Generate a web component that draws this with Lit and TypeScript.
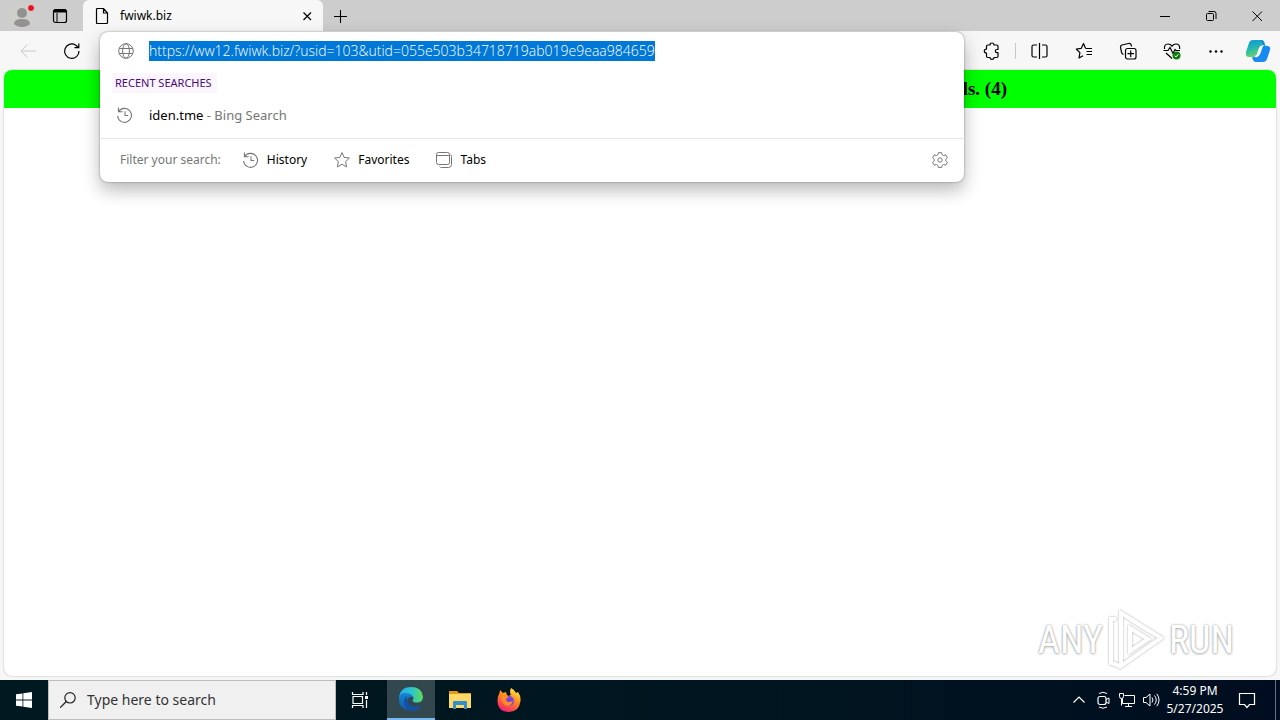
import { LitElement, html, css, svg, type TemplateResult, type SVGTemplateResult } from "lit";
import { customElement } from "lit/decorators.js";

const icon = (size: number, body: SVGTemplateResult, box = "0 0 16 16"): TemplateResult =>
  html`<svg width=${size} height=${size} viewBox=${box} fill="none" stroke="currentColor" aria-hidden="true">${body}</svg>`;

const historyIcon = icon(18, svg`<path d="M2.3 1.5v4h4M2.5 5.3A6.6 6.6 0 1 1 1.5 9.5M8.5 5v4h3" />`, "0 0 17 17");
const globeIcon = icon(18, svg`<circle cx="9" cy="9" r="7.3"/><ellipse cx="9" cy="9" rx="3.4" ry="7.3"/><path d="M2.3 6.5h13.4M2.3 11.5h13.4"/>`, "0 0 18 18");
const starIcon = icon(18, svg`<path stroke-linejoin="round" d="M9 1.6l2.2 4.8 5.2.6-3.8 3.6 1 5.3L9 13.3l-4.6 2.6 1-5.3L1.6 7l5.2-.6z"/>`, "0 0 18 18");
const tabsIcon = icon(18, svg`<rect x="1.5" y="1.5" width="13" height="12" rx="2"/><path d="M1.5 4.5h13M4.5 15.5q.5 1 2 1h7q3 0 3-3v-8q0-1.500-1-2"/>`, "0 0 18 18");
const gearIcon = icon(18, svg`<circle cx="9" cy="9" r="2.200"/><path stroke-linejoin="round" d="M7.300 1.700h3.400l.5 2.100 1.300.8 2.200-.7 1.700 2.900-1.600 1.500v1.500l1.600 1.500-1.700 2.900-2.200-.7-1.300.8-.5 2.100H7.300l-.5-2.100-1.300-.8-2.200.7-1.700-2.900 1.600-1.500V8.300L1.600 6.800l1.700-2.900 2.200.7 1.300-.8z"/>`, "0 0 18 18");

@customElement("app-root")
export class AppRoot extends LitElement {
  static styles = css`
    :host {
      display: flex;
      flex-direction: column;
      min-height: 100vh;
      background: #f7f7f7;
      color: #000;
      font: 13px/20px "Noto Sans", "Open Sans", sans-serif;
    }
    * { box-sizing: border-box; }
    button, input { font: inherit; color: inherit; border: 0; padding: 0; margin: 0; background: none; }
    button { display: flex; align-items: center; justify-content: center; flex: none; }
    svg { display: block; flex: none; }

    .titlebar { display: flex; height: 31px; background: #cdcdcd; flex: none; }
    .profile { width: 44px; }
    .workspaces { width: 32px; margin-right: 7px; }
    .tab {
      display: flex; align-items: center; width: 240px; gap: 10px;
      padding: 0 8px 0 11px; background: #f7f7f7; border-radius: 6px 6px 0 0; font-size: 12px;
    }
    .tab-title { flex: 1; }
    .newtab { width: 34px; }
    .window-controls { display: flex; margin-left: auto; }
    .window-controls button { width: 46px; }

    .toolbar { display: flex; height: 39px; flex: none; padding: 0 2px 0 6px; }
    .tool { width: 44px; }
    .disabled { color: #c8c8c8; }
    .address { flex: 1; position: relative; margin: 0 6px; }
    .divider { width: 1px; height: 16px; align-self: center; margin: 0 2px 0 1px; background: #c8c8c8; }
    .copilot { width: 40px; }

    .suggest {
      position: absolute; z-index: 2; top: 1px; left: 0; right: 0;
      background: #fff; border-radius: 8px; color: #767676;
      box-shadow: 0 0 2px rgba(0, 0, 0, .45), 0 8px 18px rgba(0, 0, 0, .28);
    }
    .url-row, .result { display: flex; align-items: center; gap: 14px; padding: 0 17px; }
    .url-row { height: 38px; }
    .url { height: 20px; field-sizing: content; background: #0078d7; color: #fff; font: 300 14px/20px "Open Sans", "Noto Sans", sans-serif; }
    .group {
      display: table; margin: 3px 0 0 12px; padding: 0 5px 0 3px;
      background: #fbf5fd; color: #4b0a78; font-size: 11px; font-weight: 400;
    }
    .result { height: 45px; padding: 0 16px 2px; gap: 15px; }
    .result a { color: inherit; text-decoration: none; }
    .result b { color: #000; font-weight: 400; }
    .filters { display: flex; align-items: center; height: 44px; border-top: 1px solid #e8e8e8; padding: 0 15px 2px 20px; font-size: 12px; }
    .filters button { gap: 7px; margin-right: 26px; }
    .filters span { color: #000; }
    .filters .caption { color: #767676; margin-right: 21px; }
    .filters .settings { margin: 0 0 0 auto; }

    .page {
      flex: 1; margin: 0 4px 4px; overflow: hidden; background: #fff;
      border-radius: 8px; box-shadow: 0 0 2px rgba(0, 0, 0, .3); position: relative;
    }
    .notice {
      margin: 0; padding: 8px 269px 8px 0; background: #0f0; text-align: right;
      font: bold 19px/22px "Liberation Serif", serif;
    }
    .watermark {
      position: absolute; right: 42px; bottom: 4px; display: flex; align-items: center; gap: 4px;
      color: #fff; font: 38px/64px "Roboto Condensed", "Open Sans Condensed", "Noto Sans Condensed", "Liberation Sans Narrow", sans-serif;
      text-shadow: 0 0 2px #999, 0 1px 3px #bbb;
    }
    .play { filter: drop-shadow(0 0 1px #aaa); }

    .taskbar { display: flex; height: 40px; flex: none; background: linear-gradient(90deg, #001820, #00151f 60%, #000d20); color: #fff; }
    .start { width: 48px; }
    .search {
      display: flex; align-items: center; gap: 11px; width: 288px; padding-left: 11px;
      background: #f0f0f0; border: 1px solid #bdbdbd; color: #222;
    }
    .search input { flex: 1; min-width: 0; font-size: 14px; }
    .search input::placeholder { color: #333; opacity: 1; }
    .app { width: 48px; margin-right: 1px; }
    .taskview { margin-right: 3px; }
    .active { background: #33474e; border-bottom: 2px solid #76b9ed; }
    .tray { display: flex; margin-left: auto; }
    .tray button { width: 24px; }
    .tray .clock { width: 64px; font-size: 12px; line-height: 18px; white-space: nowrap; }
    .tray .notify { width: 40px; }
    .tray .desktop { width: 5px; margin-left: 8px; border-left: 1px solid #687080; }
  `;

  render() {
    return html`
      <header class="titlebar">
        <button class="profile" aria-label="Profile">
          <svg width="28" height="28" viewBox="0 0 28 28"><circle cx="14" cy="14" r="13" fill="#d0cecb"/><circle cx="14" cy="11" r="5" fill="#929292"/><path d="M6 22q0-5 8-5t8 5q-3 3-8 3t-8-3z" fill="#929292"/><circle cx="23" cy="6" r="3.500" fill="#e81123" stroke="#d8d8d8"/></svg>
        </button>
        <button class="workspaces" aria-label="Tab actions">
          ${icon(16, svg`<rect x="1.500" y="1.500" width="13" height="13" rx="2" stroke-width="1.200"/><path d="M1.500 3.500h13M5 5v9" stroke-width="1"/><path d="M2 3h12" stroke-width="3"/>`)}
        </button>
        <div class="tab">
          ${icon(16, svg`<path d="M2.500 1.500q0-1 1-1h6l4 4.500v9.500q0 1-1 1h-9q-1 0-1-1zM9.500.5v4.500h4" stroke-width="1.200"/>`)}
          <span class="tab-title">fwiwk.biz</span>
          <button aria-label="Close tab">${icon(16, svg`<path d="M4.500 4.500l7.500 7.500M12 4.500L4.500 12" stroke-width="1.200"/>`)}</button>
        </div>
        <button class="newtab" aria-label="New tab">${icon(16, svg`<path d="M8.500 2v13M2 8.500h13" stroke-width="1.100"/>`)}</button>
        <div class="window-controls">
          <button aria-label="Minimize">${icon(16, svg`<path d="M3 8.500h10"/>`)}</button>
          <button aria-label="Restore">${icon(16, svg`<rect x="3.500" y="5.500" width="7" height="7" rx="1"/><path d="M5.500 3.500h5.500q2 0 2 2V11"/>`)}</button>
          <button aria-label="Close">${icon(16, svg`<path d="M3.500 3.500l9.500 9.500M13 3.500L3.500 13"/>`)}</button>
        </div>
      </header>

      <nav class="toolbar">
        <button class="tool disabled" aria-label="Back">${icon(18, svg`<path d="M17 9H2M8.500 2.500L2 9l6.500 6.500"/>`, "0 0 18 18")}</button>
        <button class="tool" aria-label="Refresh">${icon(18, svg`<path d="M16 9A7.200 7.200 0 1 1 12.500 3L15.500 5.500M15.800 1.500V5.700h-4.300" stroke-width="1.200"/>`, "0 0 18 18")}</button>
        <div class="address">
          <section class="suggest">
            <div class="url-row">
              ${globeIcon}
              <input class="url" aria-label="Address" value="https://ww12.fwiwk.biz/?usid=103&utid=055e503b34718719ab019e9eaa984659" />
            </div>
            <h2 class="group">RECENT SEARCHES</h2>
            <div class="result">${historyIcon}<a href="#"><b>iden.tme</b> - Bing Search</a></div>
            <div class="filters">
              <span class="caption">Filter your search:</span>
              <button>${historyIcon}<span>History</span></button>
              <button>${starIcon}<span>Favorites</span></button>
              <button>${tabsIcon}<span>Tabs</span></button>
              <button class="settings" aria-label="Settings">${gearIcon}</button>
            </div>
          </section>
        </div>
        <button class="tool" aria-label="Extensions">${icon(18, svg`<path stroke-width="1.200" stroke-linejoin="round" d="M3.500 4.200q0-1.200 1.200-1.200H7q0-2 2-2t2 2h2.800q1.200 0 1.200 1.200v3.300h-1q-1.700 0-1.700 1.600t1.700 1.600h1v3.600q0 1.200-1.200 1.200H11q0 1.800-2 1.800t-2-1.800H4.700q-1.200 0-1.200-1.200v-3.200Q1.300 11.100 1.300 9.100t2.200-2z"/>`, "0 0 18 18")}</button>
        <span class="divider"></span>
        <button class="tool" aria-label="Split screen">${icon(18, svg`<path stroke-width="1.200" d="M8.500 1v16M6 3H2.500Q1 3 1 4.500v9Q1 15 2.500 15H6M11 3h3.500Q16 3 16 4.500v9q0 1.500-1.500 1.500H11"/>`, "0 0 18 18")}</button>
        <button class="tool" aria-label="Favorites">${icon(18, svg`<path stroke-width="1.200" stroke-linejoin="round" d="M10.500 6.300L8.500 1.600 6.300 6.300 1.300 7l3.600 3.600-.9 5.400 4-2.200M10.500 6.500H17M11.500 9.500H17M11.500 12.500H17"/>`, "0 0 18 18")}</button>
        <button class="tool" aria-label="Collections">${icon(18, svg`<rect x="6.500" y="6.500" width="10.500" height="10.500" rx="2" stroke-width="1.200"/><path stroke-width="1.200" d="M11.700 8.500v6.500M8.500 11.700H15M4.500 12.500Q3 12 2.600 10.500L1.500 5.500Q1.200 3.500 3 3l6.500-1.500q2-.4 2.700 1.500l.3 1.500"/>`, "0 0 18 18")}</button>
        <button class="tool" aria-label="Browser essentials">${icon(18, svg`<path stroke-width="1.200" d="M1.500 7Q1 2 5 2q2.500 0 4 2.200Q10.500 2 13 2q4 0 3.700 5M.5 8.500H5l2-3 3 6 2-4 1 1h4M3 11l6 5.500"/><circle cx="13.500" cy="13.500" r="4" fill="#107c10" stroke="none"/><path stroke="#fff" d="M11.600 13.700l1.300 1.300 2.500-2.800"/>`, "0 0 18 18")}</button>
        <button class="tool" aria-label="More">${icon(16, svg`<g fill="currentColor" stroke="none"><circle cx="2.500" cy="8.500" r="1.200"/><circle cx="8" cy="8.500" r="1.200"/><circle cx="13.500" cy="8.500" r="1.200"/></g>`)}</button>
        <button class="copilot" aria-label="Copilot">
          <svg width="26" height="26" viewBox="0 0 26 26"><defs><linearGradient id="a" x2=".3" y2="1"><stop stop-color="#168fdc"/><stop offset=".5" stop-color="#20b6b6"/><stop offset="1" stop-color="#69d36d"/></linearGradient><linearGradient id="b" x2=".6" y2="1"><stop stop-color="#0b4fc0"/><stop offset=".5" stop-color="#1689ee"/><stop offset="1" stop-color="#1b8bf2"/></linearGradient></defs><path d="M8 2h9q2 0 3 4l.7 2H17q-2 0-3 3l-2 6q-1 2-3 2H4q-4 0-3-5L4 5Q5 2 8 2z" fill="url(#a)"/><path d="M15 2q3 0 4 4l.5 2H22q4 0 3 4l-3 9q-1 3-4 3h-7q-3 0-4-5 3 1 4.500-2L15 9q1-2 3-2-1-5-3-5z" fill="url(#b)"/><path d="M17.500 8q-2 0-3 2.500l-2 6q-.6 1.800-2.500 2 1.500 0 2.500-.5 1.500-.7 2.300-3l1.700-5q.5-1.500 1-2z" fill="#f7f7f7" stroke="#f7f7f7" stroke-width="1.500"/></svg>
        </button>
      </nav>

      <main class="page">
        <h1 class="notice">ls. (4)</h1>
        <div class="watermark">
          <span>ANY</span>
          <svg class="play" width="58" height="62" viewBox="0 0 58 62" fill="none" stroke="#fff" stroke-width="4"><path d="M14 4l40 25-40 28zM23 19l18 11-18 12zM9 10H4v44l9 3M23 10l31 19"/></svg>
          <span>RUN</span>
        </div>
      </main>

      <footer class="taskbar">
        <button class="start" aria-label="Start"><svg width="16" height="16" viewBox="0 0 16 16" fill="#fff"><path d="M0 2.300L6.500 1.400v6.100H0zM7.300 1.300L16 0v7.500H7.300zM0 8.400h6.500v6.200L0 13.700zM7.300 8.400H16V16l-8.700-1.300z"/></svg></button>
        <label class="search">${icon(16, svg`<circle cx="10" cy="5.800" r="5.200" stroke-width="1.200"/><path d="M6.300 9.500L0 15.800" stroke-width="1.300"/>`)}<input aria-label="Search" placeholder="Type here to search" /></label>
        <button class="app taskview" aria-label="Task view">${icon(18, svg`<path d="M2 5.500h9.500v7H2zM1.500 1v2.500H12V1M1.500 17v-2.500H12V17M15.500 1v3M15.500 9v8" stroke-width="1.200"/><path d="M14 5h3v3h-3z" fill="#fff" stroke="none"/>`, "0 0 18 18")}</button>
        <button class="app active" aria-label="Edge">
          <svg width="24" height="24" viewBox="0 0 24 24"><defs><linearGradient id="e1"><stop stop-color="#25a9ee"/><stop offset=".5" stop-color="#2bc3d2"/><stop offset="1" stop-color="#5fdc58"/></linearGradient><linearGradient id="e2" x2="0" y2="1"><stop stop-color="#1685d8"/><stop offset="1" stop-color="#0c59a4"/></linearGradient></defs><path d="M0 11Q1 0 12 0q11 0 12 9.500 0 6-6 6-4 0-4.500-2 2-2 0-4.500Q8 4 0 11z" fill="url(#e1)"/><path d="M0 12q0-6 6-6 6 0 8 4-5-1-5.500 3.500Q9 20 16 20q3 0 6-2-3 6-10 6Q0 23 0 12z" fill="url(#e2)"/><path d="M8 9q-5 4-2 10 3 5 8 4.500 5-1 8-5.500-6 3-10.500 0-4-3-3.500-9z" fill="#1750a0"/></svg>
        </button>
        <button class="app" aria-label="File Explorer">
          <svg width="22" height="20" viewBox="0 0 22 20"><path d="M0 1h8l2 2h12v15H0z" fill="#e39b18"/><path d="M0 4h22v14H0z" fill="#ffd968"/><path d="M4 19v-7q0-1 1-1h12q1 0 1 1v7h-3v-4H7v4z" fill="#318fce"/></svg>
        </button>
        <button class="app" aria-label="Firefox">
          <svg width="24" height="24" viewBox="0 0 24 24"><defs><linearGradient id="f" x1=".8" x2=".3" y2="1"><stop stop-color="#fff04a"/><stop offset=".45" stop-color="#ff8a20"/><stop offset="1" stop-color="#f21c72"/></linearGradient></defs><path d="M14 0q4 2 5 5l2-1q3 4 2.500 9Q22 24 12 24 1 24 .5 13 .5 8 2.500 5L3 2l3 3 3-1q0 2 2 4l3-1q-2-3 0-7z" fill="url(#f)"/><circle cx="12" cy="13" r="5" fill="#7542e5"/><path d="M4 8q4-2 8 1l-3 2q0 3 3 3 3 0 4-2-1 6-6 6-5-1-6-10z" fill="#ff8b22"/></svg>
        </button>
        <div class="tray">
          <button aria-label="Show hidden icons">${icon(16, svg`<path d="M2.500 10.500L8 5l5.500 5.500" stroke-width="1.200"/>`)}</button>
          <button aria-label="Meet now">${icon(18, svg`<rect x="4" y="5.500" width="8" height="8" rx="2" stroke-width="1.200"/><path d="M12 8.500l3-1.500v5.500L12 11M5 2.500q4-2.500 8 0M5 16q4 2.500 8 0"/>`, "0 0 18 18")}</button>
          <button aria-label="Network">${icon(18, svg`<path d="M6.500 4.500h10v8H4.500V7.500M10.500 12.500v3M7 15.500h7M1.500 2.500h4v3q0 2-2 2t-2-2zM3.500 7.500v7"/>`, "0 0 18 18")}</button>
          <button aria-label="Volume">${icon(18, svg`<path d="M1.500 6.500h2.500L8 3v12l-4-3.500H1.500zM10 6.500q2 2.500 0 5M12.500 4.500q3.500 4.500 0 9M14.800 2.800q4.500 6.200 0 12.400"/>`, "0 0 18 18")}</button>
          <button class="clock"><span>4:59 PM<br />5/27/2025</span></button>
          <button class="notify" aria-label="Notifications">${icon(18, svg`<path d="M1.500 2.500h15v11h-5L9 16.500 6.500 13.500h-5z" stroke-width="1.200"/>`, "0 0 18 18")}</button>
          <button class="desktop" aria-label="Show desktop"></button>
        </div>
      </footer>
    `;
  }
}
